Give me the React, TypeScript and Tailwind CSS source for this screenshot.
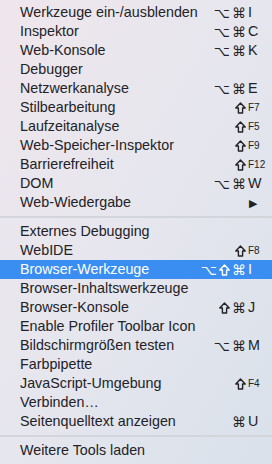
type Item = { label: string; mods?: string; key?: string; fkey?: boolean; submenu?: boolean; active?: boolean }

const groups: Item[][] = [
  [
    { label: 'Werkzeuge ein-/ausblenden', mods: '⌥⌘', key: 'I' },
    { label: 'Inspektor', mods: '⌥⌘', key: 'C' },
    { label: 'Web-Konsole', mods: '⌥⌘', key: 'K' },
    { label: 'Debugger' },
    { label: 'Netzwerkanalyse', mods: '⌥⌘', key: 'E' },
    { label: 'Stilbearbeitung', mods: '⇧', key: 'F7', fkey: true },
    { label: 'Laufzeitanalyse', mods: '⇧', key: 'F5', fkey: true },
    { label: 'Web-Speicher-Inspektor', mods: '⇧', key: 'F9', fkey: true },
    { label: 'Barrierefreiheit', mods: '⇧', key: 'F12', fkey: true },
    { label: 'DOM', mods: '⌥⌘', key: 'W' },
    { label: 'Web-Wiedergabe', submenu: true },
  ],
  [
    { label: 'Externes Debugging' },
    { label: 'WebIDE', mods: '⇧', key: 'F8', fkey: true },
    { label: 'Browser-Werkzeuge', mods: '⌥⇧⌘', key: 'I', active: true },
    { label: 'Browser-Inhaltswerkzeuge' },
    { label: 'Browser-Konsole', mods: '⇧⌘', key: 'J' },
    { label: 'Enable Profiler Toolbar Icon' },
    { label: 'Bildschirmgrößen testen', mods: '⌥⌘', key: 'M' },
    { label: 'Farbpipette' },
    { label: 'JavaScript-Umgebung', mods: '⇧', key: 'F4', fkey: true },
    { label: 'Verbinden…' },
    { label: 'Seitenquelltext anzeigen', mods: '⌘', key: 'U' },
  ],
  [{ label: 'Weitere Tools laden' }],
]

// Umschalt-Taste als Umriss-Pfeil, wie im macOS-Menü
function ShiftIcon() {
  return (
    <svg width="11" height="12" viewBox="0 0 11 12">
      <path
        d="M5.5 1 L10.2 6 H7.6 V11 H3.4 V6 H0.8 Z"
        fill="none"
        stroke="currentColor"
        strokeWidth="1.4"
        strokeLinejoin="round"
      />
    </svg>
  )
}

function Mods({ mods }: { mods: string }) {
  return (
    <span
      className="flex items-center gap-[2px] pr-[1px] text-[14px] leading-none"
      style={{ fontFamily: '"DejaVu Sans", sans-serif' }}
    >
      {[...mods].map((m, i) => (m === '⇧' ? <ShiftIcon key={i} /> : <span key={i}>{m}</span>))}
    </span>
  )
}

function Row({ item }: { item: Item }) {
  return (
    <li
      className={`flex h-[19px] items-center pl-5 pr-[5px] ${
        item.active ? 'bg-[#3a8ef2] text-white' : 'text-[#222226]'
      }`}
    >
      <span className="flex-1 whitespace-nowrap">{item.label}</span>
      {item.mods && <Mods mods={item.mods} />}
      <span className={`w-[20px] whitespace-nowrap pl-[1px] ${item.fkey ? 'text-[10px]' : ''}`}>
        {item.submenu ? <span className="pl-[1px] text-[11px]">▶</span> : item.key}
      </span>
    </li>
  )
}

export default function App() {
  return (
    <div
      className="h-[464px] w-[272px] overflow-hidden bg-gradient-to-br from-[#efe6ec] via-[#e6e6ee] to-[#d9e1ea] pt-[3px] text-[14.3px]"
      style={{ fontFamily: '"Liberation Sans", Arial, sans-serif' }}
    >
      {groups.map((group, i) => (
        <div key={i}>
          {i > 0 && (
            <div className="flex h-[10px] items-center">
              <div className="h-[2px] w-full bg-[#d2d5db]" />
            </div>
          )}
          <ul>
            {group.map((item) => (
              <Row key={item.label} item={item} />
            ))}
          </ul>
        </div>
      ))}
    </div>
  )
}
